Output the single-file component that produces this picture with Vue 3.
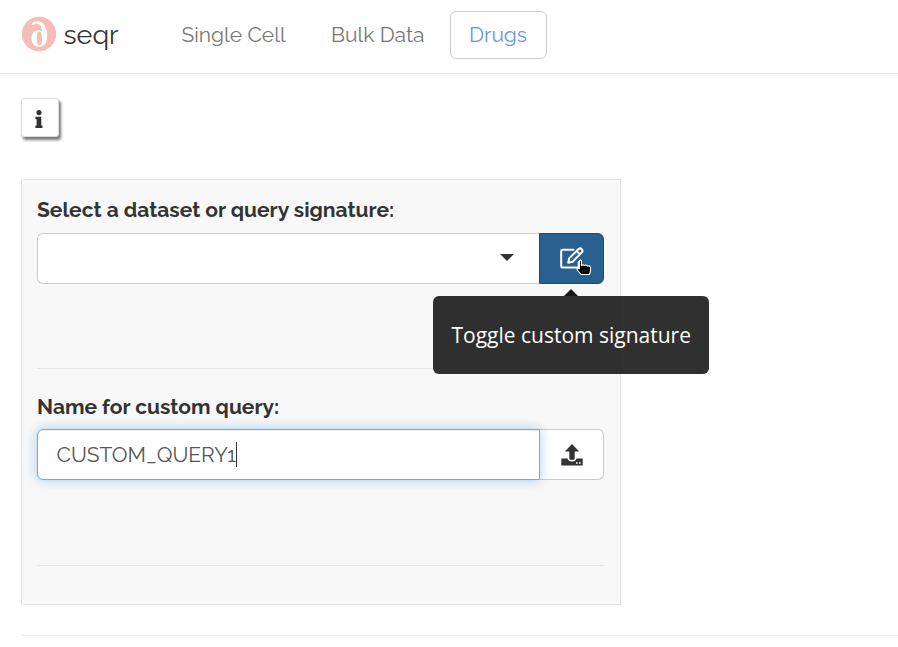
<script setup>
import { ref } from 'vue'

const tabs = ['Single Cell', 'Bulk Data', 'Drugs']
const active = ref('Drugs')
const queryName = ref('CUSTOM_QUERY1')
</script>

<template>
  <div class="page">
    <header class="navbar">
      <a class="brand">
        <svg class="logo" width="36" height="36" viewBox="0 0 36 36">
          <circle cx="18" cy="18" r="17.2" fill="#f5bdb7" />
          <path fill="#fff" fill-rule="evenodd" d="M10.300 8.500C11.300 6.400 13.500 5.200 16 5.200C22.500 5.200 26.200 11 26.200 19.500C26.200 26.500 23.500 30.800 18.300 30.800C13.300 30.800 10.500 27.500 10.500 22.300C10.500 17.300 13.200 14.200 17.500 14.200C19.400 14.200 20.600 14.800 21.200 16C20.900 10.500 18.800 7.800 15.500 7.800C14.200 7.800 13.400 8.200 12.500 9.100ZM18.400 15.800C16.400 15.800 15.800 18 15.800 22.500C15.800 27.200 16.400 29.200 18.400 29.200C20.400 29.200 21 27.200 21 22.500C21 18 20.400 15.800 18.400 15.800Z" />
        </svg>
        <span class="brand-name">seqr</span>
      </a>
      <nav class="tabs">
        <a v-for="(tab, i) in tabs" :key="tab" class="tab" :class="['tab-' + i, { active: tab === active }]" @click="active = tab"><span>{{ tab }}</span></a>
      </nav>
    </header>

    <main class="content">
      <button class="info" aria-label="Information">
        <svg width="8" height="18" viewBox="0 0 8 18" fill="#333">
          <circle cx="4" cy="2.600" r="2.600" />
          <path d="M.4 6.800H6.300V15.600H7.500V18H.4V15.600H1.600V9.200H.4Z" />
        </svg>
      </button>

      <section class="panel">
        <div class="field">
          <label class="label">Select a dataset or query signature:</label>
          <div class="group">
            <div class="select"><i class="caret"></i></div>
            <button class="addon primary" aria-label="Toggle custom signature">
              <svg class="edit" width="24" height="22" viewBox="0 0 24 22" fill="none" stroke="#fff" stroke-width="2" stroke-linejoin="round" stroke-linecap="round">
                <path d="M13.500 2.800H2.500Q1.200 2.800 1.200 4.100V19.300Q1.200 20.600 2.500 20.600H17.400Q18.700 20.600 18.700 19.300V15" />
                <path d="M8.200 15.800L9.100 11.400L18.600 2Q20.200.7 21.700 2.200T22 5.300L12.600 14.800Z M16.600 4L20 7.400" />
              </svg>
              <svg class="pointer" width="16" height="17" viewBox="0 0 16 17">
                <path d="M3.500 1.500Q4.500.500 5.500 1.500V6.500L7 5.700L8.500 6.500L10 6L11.500 7L13 6.800L14.500 8V12L13.500 15.500H5L1.200 10.800L1 9L3.500 9.800Z" fill="#000" stroke="#fff" stroke-width="1.100" stroke-linejoin="round" />
                <path d="M6.500 11V13M8.800 11V13M11 11V13" stroke="#555" stroke-width=".6" />
              </svg>
              <span class="tooltip" role="tooltip">Toggle custom signature</span>
            </button>
          </div>
        </div>

        <div class="field second">
          <label class="label">Name for custom query:</label>
          <div class="group">
            <div class="input"><span>{{ queryName }}</span><i class="text-cursor"></i></div>
            <button class="addon upload" aria-label="Upload">
              <svg width="22" height="22" viewBox="0 0 22 22">
                <path d="M.3 14.500H6.500Q7.300 17.500 11 17.500T15.500 14.500H21.700V21.500H.3Z" fill="#333" />
                <path d="M11 0L18.200 7.500H13.700V15.300Q11 16.600 8.300 15.300V7.500H3.800Z" fill="#333" />
                <path d="M15 18.200H16.600V19.800H15ZM18 18.200H19.600V19.800H18Z" fill="#fff" />
              </svg>
            </button>
          </div>
        </div>
      </section>
      <hr class="divider" />
    </main>
  </div>
</template>

<style>
body { background: #fff; overflow: hidden; }
</style>

<style scoped>
* { box-sizing: border-box; }
.page { width: 898px; height: 647px; overflow: hidden; font-family: Raleway, Lato, "Open Sans", sans-serif; font-size: 21px; color: #333; }
button { font: inherit; margin: 0; padding: 0; }
.navbar { display: flex; align-items: flex-start; height: 74px; border-bottom: 1px solid #e7e7e7; padding-left: 21px; }
.brand { display: flex; width: 141.5px; height: 68px; align-items: center; gap: 6.5px; }
.logo { flex: none; }
.brand-name { font-size: 27px; line-height: 34px; padding-top: 1px; white-space: nowrap; }
.tabs { display: flex; padding-top: 11px; }
.tab { height: 48px; line-height: 46px; border: 1px solid transparent; border-radius: 6px; padding-left: 18px; color: #777; white-space: nowrap; }
.tab-0 { width: 149.5px; }
.tab-1 { width: 138px; }
.tab-2 { width: 97px; }
.tab.active { border-color: #ccc; color: #6495ed; }
.content { padding: 24px 0 0 21px; }
.info { display: flex; align-items: center; justify-content: center; width: 38px; height: 39px; padding: 3px 2px 0 0; border: 1px solid #ddd; border-radius: 3px; background: #fff; box-shadow: 2px 3px 3px #777; }
.panel { width: 600px; height: 426px; margin-top: 42px; padding: 15px 16px 0 15px; border: 1px solid #e3e3e3; background: #f8f8f8; }
.field { height: 174px; border-bottom: 1px solid #e5e5e5; }
.second { height: 174px; margin-top: 23px; }
.label { display: block; height: 38px; line-height: 30px; font-weight: 700; white-space: nowrap; }
.second .label { height: 37px; }
.group { display: flex; height: 51px; }
.select { display: flex; align-items: center; justify-content: flex-end; width: 502px; padding: 0 25px 2px 0; border: 1px solid #ccc; border-right: 0; border-radius: 6px 0 0 6px; background: #fff; }
.caret { border: 7.5px solid transparent; border-top: 7px solid #333; border-bottom: 0; }
.addon { display: flex; align-items: center; justify-content: center; width: 65px; border: 1px solid #ccc; border-radius: 0 6px 6px 0; background: #fff; }
.primary { position: relative; background: #286090; border-color: #204d74; }
.edit { margin: 0 0 2px 0; }
.pointer { position: absolute; left: 36px; top: 25px; }
.tooltip { position: absolute; z-index: 2; left: -107px; top: 62px; width: 276px; height: 78px; border-radius: 6px; background: #1a1a1a; color: #fff; opacity: .9; font-family: "Open Sans", sans-serif; font-size: 21px; line-height: 78px; text-align: center; white-space: nowrap; padding-left: .5px; }
.tooltip::before { content: ""; position: absolute; left: 131px; top: -7px; border: 7px solid transparent; border-top: 0; border-bottom-color: #000; }
.input { position: relative; z-index: 1; display: flex; align-items: center; width: 503px; padding-left: 18.500px; border: 1px solid #66afe9; border-radius: 6px 0 0 6px; background: #fff; color: #555; box-shadow: inset 0 1px 1px rgba(0, 0, 0, .075), 0 0 12px rgba(102, 175, 233, .6); }
.text-cursor { width: 1px; height: 25px; background: #333; }
.upload { width: 64px; border-left: 0; }
.divider { margin: 30px 0 0; border: 0; border-top: 1px solid #eee; }
</style>
